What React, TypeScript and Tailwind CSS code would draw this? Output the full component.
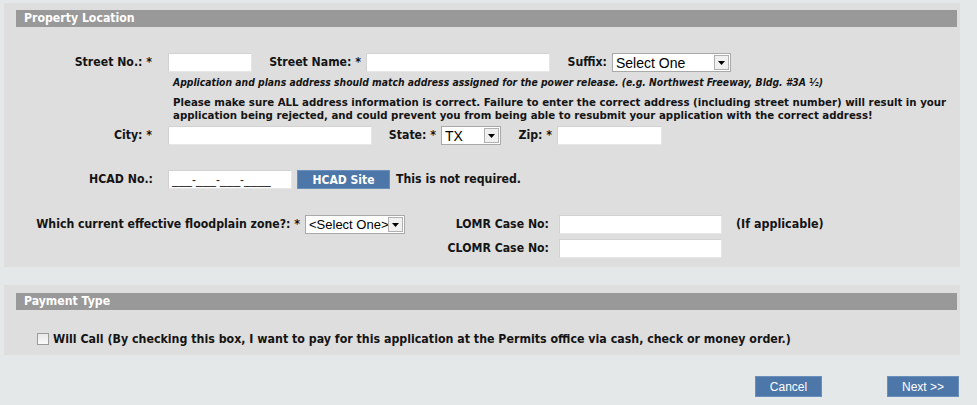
import React from 'react';

const font = "font-['DejaVu_Sans_Condensed','DejaVu_Sans',sans-serif]";

function TextBox({ w, h = 'h-[19px]', value }: { w: string; h?: string; value?: string }) {
  return (
    <div
      className={`${w} ${h} bg-white border border-[#d2d2d2] border-b-[#e6e6e6] border-r-[#e6e6e6] flex items-center px-[3px] text-[12px] text-[#222] font-['Liberation_Sans',sans-serif]`}
    >
      {value}
    </div>
  );
}

function Select({ w, value, size = 'text-[14px]' }: { w: string; value: string; size?: string }) {
  return (
    <div className={`${w} h-[19px] bg-white border border-[#a9a9a9] flex items-center justify-between`}>
      <span className={`pl-[3px] ${size} text-black font-['Liberation_Sans',sans-serif] leading-none whitespace-nowrap overflow-hidden`}>
        {value}
      </span>
      <span className="w-[15px] h-[15px] mr-[1px] border border-[#b0b0b0] bg-[#f0f0f0] flex items-center justify-center shrink-0">
        <svg width="7" height="4" viewBox="0 0 7 4">
          <path d="M0 0h7L3.5 4z" fill="#000" />
        </svg>
      </span>
    </div>
  );
}

function Label({ w, children }: { w: string; children: React.ReactNode }) {
  return (
    <div className={`${w} shrink-0 text-right font-bold text-[12.2px] text-[#141414] whitespace-nowrap`}>{children}</div>
  );
}

function SectionHeader({ title }: { title: string }) {
  return (
    <div className="ml-[12px] w-[941px] h-[17px] bg-[#999999] flex items-center pl-[8px] text-white font-bold text-[12.2px]">
      {title}
    </div>
  );
}

export default function App() {
  return (
    <div className={`w-[977px] h-[405px] bg-[#e5e8e8] pt-[3px] overflow-hidden ${font}`}>
      {/* Property Location */}
      <div className="ml-[4px] w-[956px] h-[264px] bg-[#dedede] pt-[7px]">
        <SectionHeader title="Property Location" />

        <div className="mt-[26px] flex items-center">
          <Label w="w-[148px]">Street No.: *</Label>
          <div className="ml-[16px]"><TextBox w="w-[84px]" /></div>
          <Label w="w-[109px]">Street Name: *</Label>
          <div className="ml-[5px]"><TextBox w="w-[184px]" /></div>
          <Label w="w-[57px]">Suffix:</Label>
          <div className="ml-[5px]"><Select w="w-[119px]" value="Select One" /></div>
        </div>

        <div className="ml-[169px] mt-[4px] text-[10.3px] italic font-bold text-[#141414] whitespace-nowrap leading-[13px]">
          Application and plans address should match address assigned for the power release. (e.g. Northwest Freeway, Bldg. #3A ½)
        </div>

        <div className="ml-[169px] mt-[7px] text-[11.35px] font-bold text-[#141414] whitespace-nowrap leading-[13px]">
          Please make sure ALL address information is correct. Failure to enter the correct address (including street number) will result in your
          <br />
          application being rejected, and could prevent you from being able to resubmit your application with the correct address!
        </div>

        <div className="mt-[4px] flex items-center">
          <Label w="w-[148px]">City: *</Label>
          <div className="ml-[16px]"><TextBox w="w-[204px]" /></div>
          <Label w="w-[64px]">State: *</Label>
          <div className="ml-[5px]"><Select w="w-[60px]" value="TX" /></div>
          <Label w="w-[51px]">Zip: *</Label>
          <div className="ml-[5px]"><TextBox w="w-[105px]" /></div>
        </div>

        <div className="mt-[25px] flex items-center">
          <Label w="w-[149px]">HCAD No.:</Label>
          <div className="ml-[15px]"><TextBox w="w-[124px]" value="___-___-___-____" /></div>
          <button className="ml-[5px] w-[93px] h-[19px] bg-[#4d76a9] border border-[#6b8fbd] text-white font-bold text-[12px]">
            HCAD Site
          </button>
          <span className="ml-[6px] font-bold text-[12.2px] text-[#141414]">This is not required.</span>
        </div>

        <div className="mt-[26px] flex items-center">
          <Label w="w-[296px]">Which current effective floodplain zone?: *</Label>
          <div className="ml-[5px]"><Select w="w-[100px]" value="<Select One>" size="text-[13px]" /></div>
          <Label w="w-[144px]">LOMR Case No:</Label>
          <div className="ml-[10px]"><TextBox w="w-[163px]" /></div>
          <span className="ml-[14px] font-bold text-[12.4px] text-[#141414]">(If applicable)</span>
        </div>

        <div className="mt-[5px] flex items-center">
          <Label w="w-[545px]">CLOMR Case No:</Label>
          <div className="ml-[10px]"><TextBox w="w-[163px]" /></div>
        </div>
      </div>

      {/* Payment Type */}
      <div className="ml-[4px] mt-[18px] w-[956px] h-[70px] bg-[#dedede] pt-[8px]">
        <SectionHeader title="Payment Type" />
        <div className="mt-[20px] ml-[33px] flex items-center">
          <span className="w-[12px] h-[12px] border border-[#9a9a9a] bg-gradient-to-b from-[#e8e8e8] to-[#fafafa] shrink-0" />
          <span className="ml-[4px] font-bold text-[12.3px] text-[#141414] whitespace-nowrap">
            Will Call (By checking this box, I want to pay for this application at the Permits office via cash, check or money order.)
          </span>
        </div>
      </div>

      <div className="mt-[21px] flex">
        <button className="ml-[755px] w-[67px] h-[21px] bg-[#4d76a9] border border-[#6b8fbd] text-white text-[12px] font-['Liberation_Sans',sans-serif]">
          Cancel
        </button>
        <button className="ml-[65px] w-[72px] h-[21px] bg-[#4d76a9] border border-[#6b8fbd] text-white text-[12px] font-['Liberation_Sans',sans-serif]">
          Next &gt;&gt;
        </button>
      </div>
    </div>
  );
}
